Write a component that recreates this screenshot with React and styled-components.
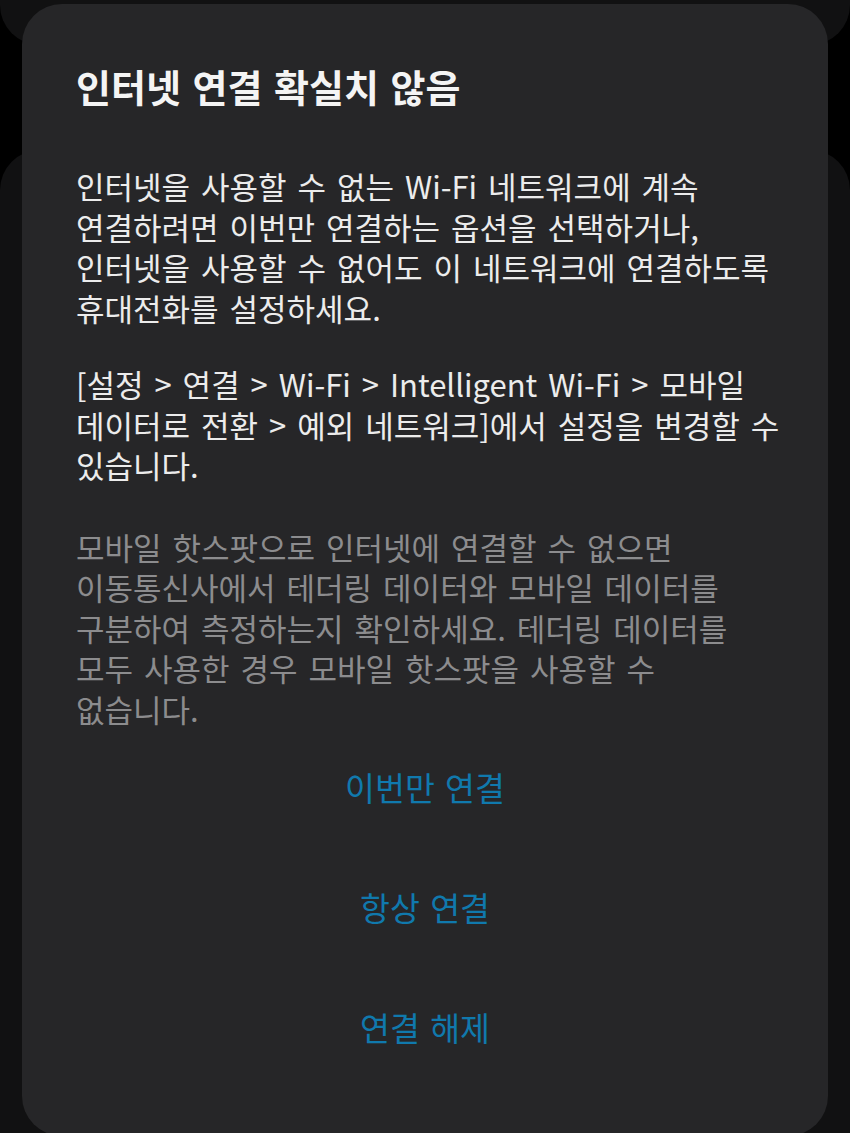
import React from 'react';
import styled, { createGlobalStyle } from 'styled-components';

const GlobalStyle = createGlobalStyle`
  html, body {
    margin: 0;
    padding: 0;
    background: #000;
  }
  body {
    font-family: "Noto Sans CJK KR", "Noto Sans", sans-serif;
    -webkit-font-smoothing: antialiased;
  }
`;

function App() {
  return (
    <Screen>
      <GlobalStyle />
      <BackLayer>
        <BackCard $top>
          <BackLabel>연결</BackLabel>
        </BackCard>
        <BackCard />
      </BackLayer>

      <Dialog>
        <Title>인터넷 연결 확실치 않음</Title>

        <Body>
          <Paragraph>
            인터넷을 사용할 수 없는 Wi-Fi 네트워크에 계속
            <br />
            연결하려면 이번만 연결하는 옵션을 선택하거나,
            <br />
            인터넷을 사용할 수 없어도 이 네트워크에 연결하도록
            <br />
            휴대전화를 설정하세요.
          </Paragraph>
          <Paragraph $gap={36}>
            [설정 &gt; 연결 &gt; Wi-Fi &gt; Intelligent Wi-Fi &gt; 모바일
            <br />
            데이터로 전환 &gt; 예외 네트워크]에서 설정을 변경할 수
            <br />
            있습니다.
          </Paragraph>
          <Paragraph $gap={41} $muted>
            모바일 핫스팟으로 인터넷에 연결할 수 없으면
            <br />
            이동통신사에서 테더링 데이터와 모바일 데이터를
            <br />
            구분하여 측정하는지 확인하세요. 테더링 데이터를
            <br />
            모두 사용한 경우 모바일 핫스팟을 사용할 수
            <br />
            없습니다.
          </Paragraph>
        </Body>

        <Actions>
          <ActionButton>이번만 연결</ActionButton>
          <ActionButton>항상 연결</ActionButton>
          <ActionButton>연결 해제</ActionButton>
        </Actions>
      </Dialog>
    </Screen>
  );
}

export default App;

const Screen = styled.div`
  position: relative;
  width: 850px;
  height: 1133px;
  overflow: hidden;
  background: #000;
`;

const BackLayer = styled.div`
  display: flex;
  flex-direction: column;
  gap: 105px;
  margin-top: -60px;
`;

const BackCard = styled.div`
  height: ${({ $top }) => ($top ? '105px' : '1100px')};
  border-radius: 40px;
  background: #111112;
  display: flex;
  align-items: flex-end;
  padding-left: 180px;
`;

const BackLabel = styled.span`
  font-size: 26px;
  color: #4a4a4c;
  line-height: 1;
  margin-bottom: 50px;
`;

const Dialog = styled.div`
  position: absolute;
  top: 4px;
  left: 22px;
  width: 806px;
  height: 1132px;
  box-sizing: border-box;
  padding: 60px 54px 0 54px;
  border-radius: 40px;
  background: #262628;
  display: flex;
  flex-direction: column;
`;

const Title = styled.h1`
  margin: 0;
  font-size: 38px;
  font-weight: 700;
  line-height: 44px;
  color: #f4f4f4;
  word-spacing: 3px;
`;

const Body = styled.div`
  margin-top: 58px;
  display: flex;
  flex-direction: column;
`;

const Paragraph = styled.p`
  margin: ${({ $gap }) => ($gap ? `${$gap}px` : '0')} 0 0 0;
  font-size: 31px;
  line-height: 40.5px;
  color: ${({ $muted }) => ($muted ? '#8c8c8e' : '#ececec')};
  word-spacing: 4px;
  white-space: nowrap;
`;

const Actions = styled.div`
  margin-top: 36px;
  display: flex;
  flex-direction: column;
  align-items: center;
  gap: 76px;
`;

const ActionButton = styled.button`
  border: none;
  background: transparent;
  padding: 0;
  font-family: "Noto Sans CJK KR", "Noto Sans", sans-serif;
  font-size: 32.5px;
  line-height: 44px;
  color: #1079ad;
  word-spacing: 3px;
  cursor: pointer;
`;
